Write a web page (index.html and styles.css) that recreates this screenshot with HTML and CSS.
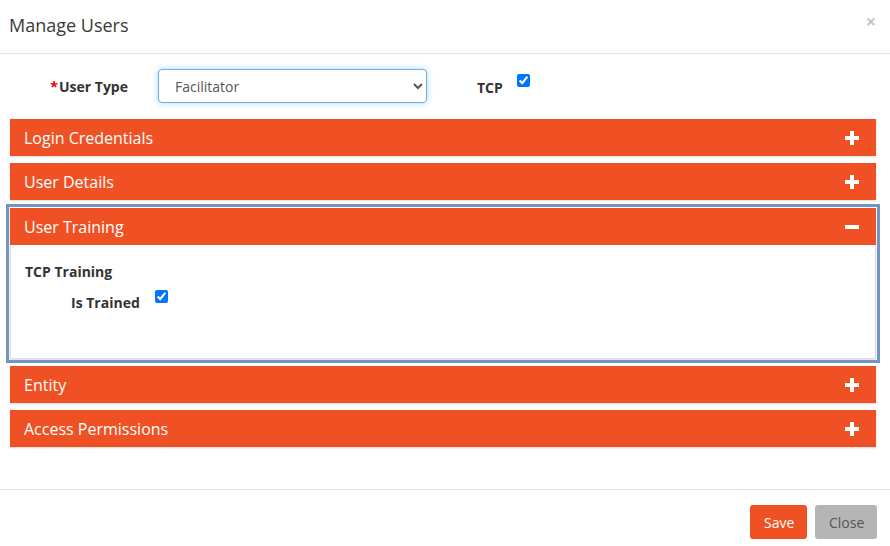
FILE: index.html
```html
<!DOCTYPE html>
<html lang="en">
<head>
    <meta charset="UTF-8">
    <title>Manage Users</title>
    <link rel="stylesheet" href="styles.css">
</head>
<body>
    <div class="modal">
        <div class="modal-header">
            <h4>Manage Users</h4>
            <span class="close-x">&times;</span>
        </div>
        <div class="modal-body">
            <div class="form-row">
                <label class="field-label"><span class="req">*</span>User Type</label>
                <select class="type-select">
                    <option>Facilitator</option>
                </select>
                <label class="tcp-label">TCP</label>
                <input type="checkbox" class="tcp-check" checked>
            </div>

            <div class="panel">
                <div class="panel-head">Login Credentials <span class="toggle plus"></span></div>
            </div>
            <div class="panel">
                <div class="panel-head">User Details <span class="toggle plus"></span></div>
            </div>
            <div class="panel active">
                <div class="panel-head">User Training <span class="toggle minus"></span></div>
                <div class="panel-body">
                    <div class="sub-title">TCP Training</div>
                    <div class="check-row">
                        <label>Is Trained</label>
                        <input type="checkbox" checked>
                    </div>
                </div>
            </div>
            <div class="panel">
                <div class="panel-head">Entity <span class="toggle plus"></span></div>
            </div>
            <div class="panel">
                <div class="panel-head">Access Permissions <span class="toggle plus"></span></div>
            </div>
        </div>
        <div class="modal-footer">
            <button class="btn btn-save">Save</button>
            <button class="btn btn-close">Close</button>
        </div>
    </div>
</body>
</html>
```

FILE: styles.css
```css
body {
    margin: 0;
    font-family: "Open Sans", Arial, sans-serif;
    color: #333;
    background-color: white;
}
.modal {
    width: 890px;
}
.modal-header {
    height: 54px;
    border-bottom: 1px solid #e5e5e5;
    box-sizing: border-box;
    display: flex;
    align-items: center;
    justify-content: space-between;
    padding: 0 14px 4px 9px;
}
.modal-header h4 {
    margin: 0;
    font-size: 18px;
    font-weight: normal;
    color: #3a3a3a;
}
.close-x {
    color: #c4c4c4;
    font-size: 18px;
    font-weight: bold;
    margin-top: -8px;
}
.modal-body {
    padding: 15px 14px 35px 10px;
}
.form-row {
    display: flex;
    align-items: center;
    height: 34px;
    margin-bottom: 16px;
}
.field-label {
    width: 118px;
    text-align: right;
    font-size: 14px;
    font-weight: bold;
    padding-top: 1px;
}
.req {
    color: #e00;
    margin-right: 1px;
}
.type-select {
    margin-left: 30px;
    width: 269px;
    height: 34px;
    padding: 0 10px 0 12px;
    font-family: "Open Sans", Arial, sans-serif;
    font-size: 14px;
    color: #555;
    border: 1px solid #66afe9;
    border-radius: 4px;
    background-color: white;
    box-shadow: 0 0 6px rgba(102, 175, 233, 0.5);
}
.tcp-label {
    margin-left: 50px;
    font-size: 14px;
    font-weight: bold;
    padding-top: 2px;
}
.tcp-check {
    margin: 0 0 12px 14px;
    width: 13px;
    height: 13px;
}
.panel {
    margin-bottom: 7px;
    box-shadow: 0 1px 2px rgba(0, 0, 0, 0.15);
}
.panel.active {
    outline: 3px solid #7395c2;
    outline-offset: 1px;
    margin-top: 8px;
    margin-bottom: 7px;
}
.panel-head {
    height: 37px;
    background-color: #f05124;
    color: white;
    font-size: 16px;
    display: flex;
    align-items: center;
    justify-content: space-between;
    padding: 0 17px 0 14px;
}
.toggle {
    position: relative;
    width: 14px;
    height: 14px;
}
.toggle::before,
.toggle::after {
    content: "";
    position: absolute;
    background-color: white;
}
.toggle::before {
    left: 0;
    top: 5px;
    width: 14px;
    height: 4px;
}
.plus::after {
    left: 5px;
    top: 0;
    width: 4px;
    height: 14px;
}
.panel-body {
    height: 114px;
    border: 1px solid #ddd;
    border-top: none;
    padding: 17px 14px 0 14px;
    box-sizing: border-box;
}
.sub-title {
    font-size: 14px;
    font-weight: bold;
}
.check-row {
    display: flex;
    align-items: flex-start;
    margin-top: 7px;
    padding-left: 46px;
}
.check-row label {
    font-size: 14px;
    font-weight: bold;
    padding-top: 5px;
}
.check-row input {
    margin: 2px 0 0 15px;
    width: 13px;
    height: 13px;
}
.modal-footer {
    border-top: 1px solid #e5e5e5;
    padding: 15px 13px 15px 0;
    display: flex;
    justify-content: flex-end;
    gap: 8px;
}
.btn {
    height: 34px;
    border: none;
    border-radius: 3px;
    font-family: "Open Sans", Arial, sans-serif;
    font-size: 14px;
    padding: 0 14px;
}
.btn-save {
    background-color: #f05124;
    color: white;
    width: 57px;
}
.btn-close {
    background-color: #b5b5b5;
    color: #555;
    width: 62px;
}
```
